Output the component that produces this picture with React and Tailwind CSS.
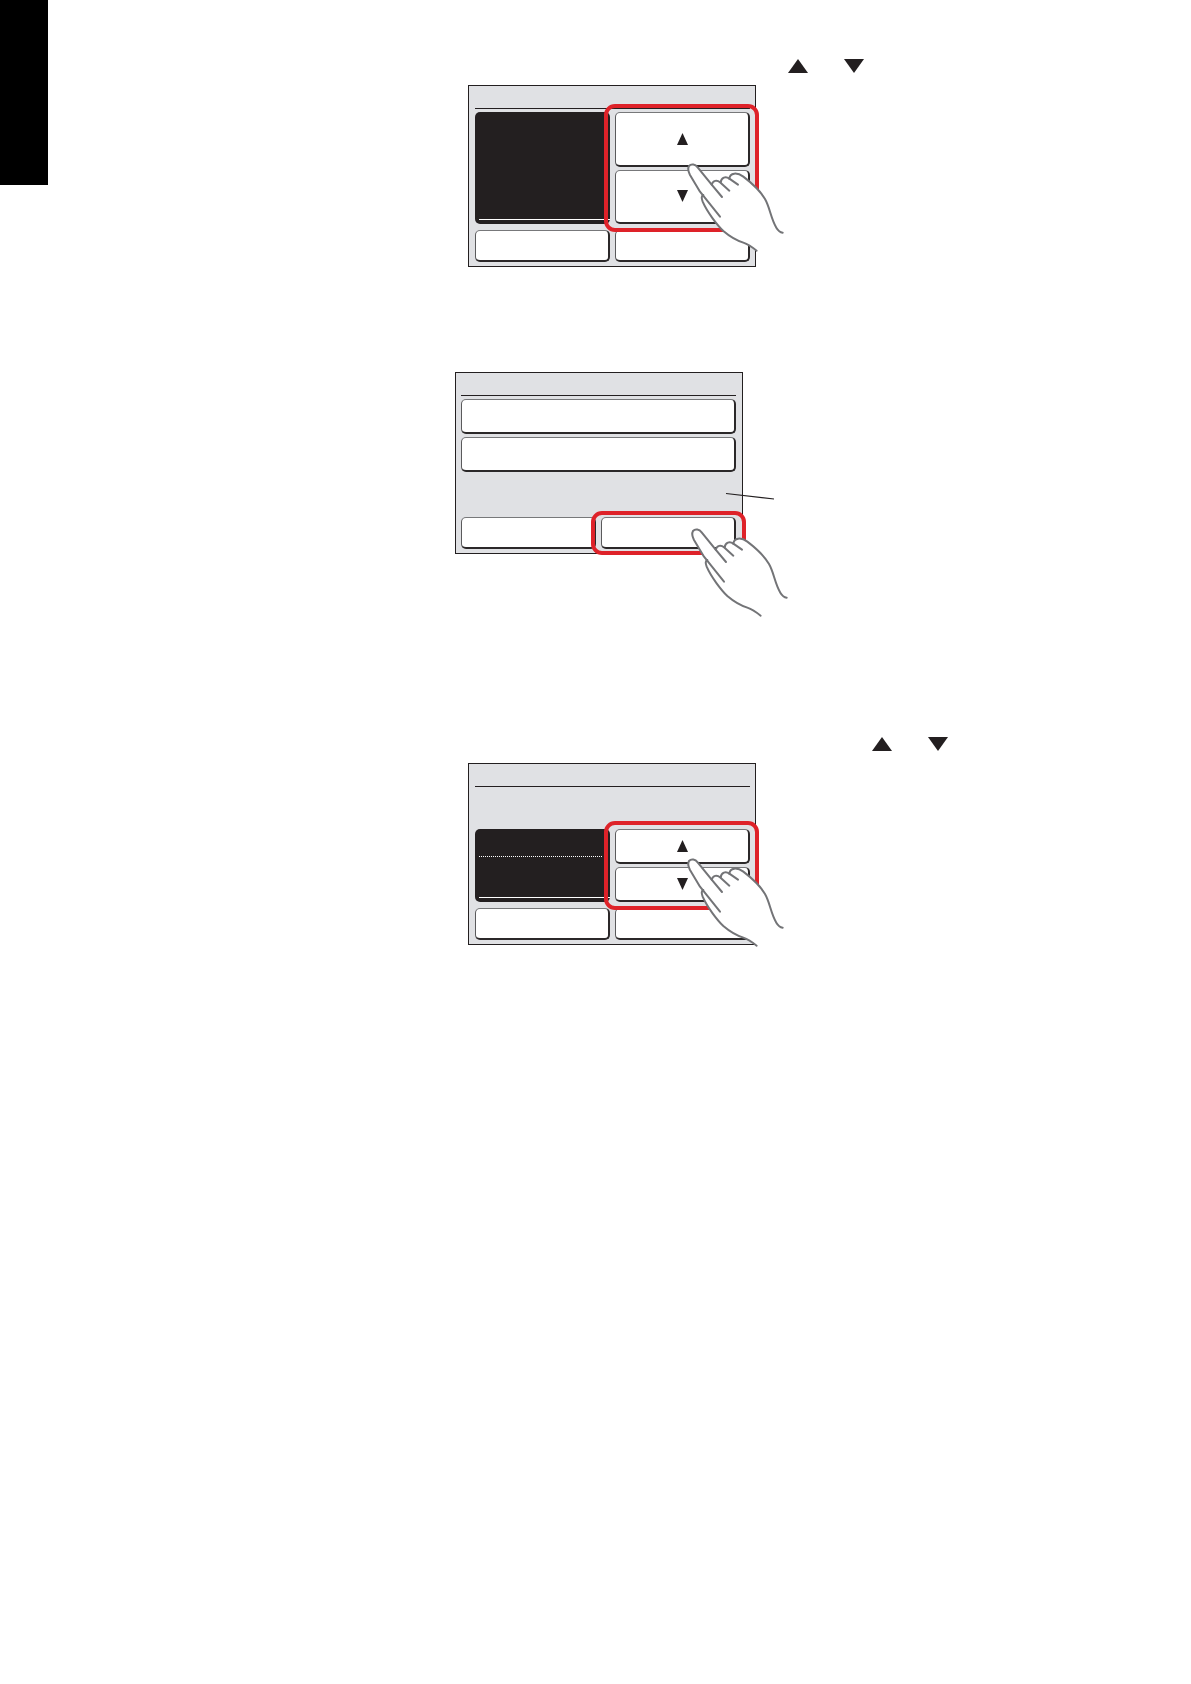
import React from 'react';
import clsx from 'clsx';

function Triangle({ down, className }) {
  return (
    <svg viewBox="0 0 20 14" preserveAspectRatio="none" className={clsx('block fill-[#231f20]', className)} aria-hidden="true">
      <path d={down ? 'M0 0h20L10 14z' : 'M10 0l10 14H0z'} />
    </svg>
  );
}

function ArrowPair({ className }) {
  return (
    <div className={clsx('flex gap-9 mb-3', className)}>
      <Triangle className="w-5 h-3.5" />
      <Triangle down className="w-5 h-3.5" />
    </div>
  );
}

function Hand({ className }) {
  return (
    <svg
      viewBox="0 0 291 267"
      className={clsx('absolute z-20 w-[97px] h-[89px] overflow-visible pointer-events-none', className)}
      fill="none"
      aria-hidden="true"
    >
      <path
        className="fill-white"
        d="M209 263C195 252 183 244 169 239C148 232 130 222 109 204C90 186 60 146 47 116C43 106 44 98 48 95L39 86L9 36C4 26 2 16 6 9C13 1 25 4 32 13L74 64C79 51 90 51 100 57C104 42 115 40 126 47C129 29 150 27 169 41C190 57 220 84 234 108C249 134 251 165 268 194C274 204 280 208 287 209Z"
      />
      <g stroke="#737477" strokeWidth="6" strokeLinecap="round" strokeLinejoin="round">
        <path d="M209 263C195 252 183 244 169 239C148 232 130 222 109 204C90 186 60 146 47 116C43 106 43 98 49 96" />
        <path d="M99 161L39 86L9 36C4 26 2 16 6 9C13 1 25 4 32 13L74 65L105 102" />
        <path d="M74 65C78 52 90 50 99 58L127 83" />
        <path d="M101 58C103 43 116 39 127 47L153 65" />
        <path d="M127 47C129 29 150 27 169 41C190 57 220 84 234 108C249 134 251 165 268 194C274 204 280 208 287 209" />
      </g>
    </svg>
  );
}

function Key({ label, className, children }) {
  return (
    <button
      type="button"
      aria-label={label}
      className={clsx(
        'flex items-center justify-center bg-white rounded-[5px] border border-r-2 border-b-2 border-[#2b2829] border-t-[#77787a] border-l-[#5a5a5c]',
        className
      )}
    >
      {children}
    </button>
  );
}

function Highlight({ className }) {
  return <span className={clsx('absolute z-10 border-4 border-[#de2229] rounded-[11px] pointer-events-none', className)} />;
}

function Screen({ className, children }) {
  return (
    <div className={clsx('relative w-72 h-[182px] flex flex-col pb-1 bg-[#e0e1e4] border border-[#231f20]', className)}>
      <div className="h-[23px] shrink-0 mb-[3px] border-b border-[#231f20]" />
      {children}
    </div>
  );
}

function Readout({ divided }) {
  return (
    <div className="flex flex-col justify-end pl-1 pb-1 bg-[#231f20] rounded-[5px]">
      {divided && <hr className="mb-10 mr-2 border-t border-dotted border-white" />}
      <hr className="border-t border-white" />
    </div>
  );
}

function StepKeys() {
  return (
    <div className="relative flex flex-col gap-[3px]">
      <Key label="Up" className="flex-1">
        <Triangle className="w-[11px] h-3" />
      </Key>
      <Key label="Down" className="flex-1">
        <Triangle down className="w-[11px] h-3" />
      </Key>
      <Highlight className="-left-[11px] -right-[9px] -inset-y-2" />
    </div>
  );
}

function FooterKeys({ highlighted }) {
  return (
    <div className="grid grid-cols-2 gap-[5px] h-8 shrink-0 mt-auto">
      <Key label="Left key" />
      <div className="relative flex">
        <Key label="Right key" className="flex-1" />
        {highlighted && <Highlight className="-inset-x-2.5 -inset-y-1.5" />}
      </div>
    </div>
  );
}

export default function App() {
  return (
    <div className="flex items-start min-h-screen bg-white">
      <aside className="w-12 h-[185px] shrink-0 bg-black" />

      <main className="flex-1 pl-[407px] pt-[59px]">
        <section className="mb-[105px]">
          <ArrowPair className="ml-[333px]" />
          <Screen className="ml-[13px] pl-1.5 pr-[5px]">
            <div className="grid grid-cols-2 gap-[5px] h-28">
              <Readout />
              <StepKeys />
            </div>
            <FooterKeys />
            <Hand className="left-[218px] top-[77px]" />
          </Screen>
        </section>

        <section className="mb-[183px]">
          <Screen className="pl-[5px] pr-1.5">
            <div className="flex flex-col gap-[3px]">
              <Key label="First item" className="h-[35px]" />
              <Key label="Second item" className="h-[35px]" />
            </div>
            <FooterKeys highlighted />
            {/* leader line out of the message area */}
            <svg viewBox="0 0 48 6" className="absolute left-[270px] top-[120px] w-12 h-1.5 overflow-visible" aria-hidden="true">
              <path d="M0 0.5L48 6" stroke="#231f20" strokeWidth="1.2" />
            </svg>
            <Hand className="left-[235px] top-[155px]" />
          </Screen>
        </section>

        <section>
          <ArrowPair className="ml-[417px]" />
          <Screen className="ml-[13px] pl-1.5 pr-[5px]">
            <div className="grid grid-cols-2 gap-[5px] h-[73px] mt-[39px]">
              <Readout divided />
              <StepKeys />
            </div>
            <FooterKeys />
            <Hand className="left-[218px] top-[94px]" />
          </Screen>
        </section>
      </main>
    </div>
  );
}
